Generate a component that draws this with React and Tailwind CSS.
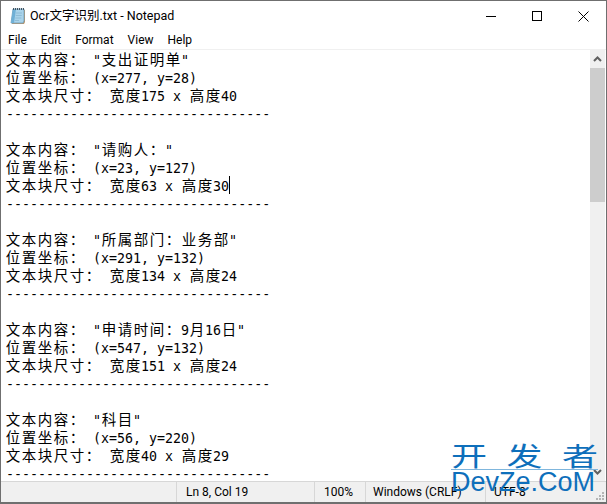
import React from "react";

const BLOCKS = [
  ["文本内容： \"支出证明单\"", "位置坐标： (x=277, y=28)", "文本块尺寸： 宽度175 x 高度40"],
  ["文本内容： \"请购人：\"", "位置坐标： (x=23, y=127)", "文本块尺寸： 宽度63 x 高度30"],
  ["文本内容： \"所属部门：业务部\"", "位置坐标： (x=291, y=132)", "文本块尺寸： 宽度134 x 高度24"],
  ["文本内容： \"申请时间：9月16日\"", "位置坐标： (x=547, y=132)", "文本块尺寸： 宽度151 x 高度24"],
  ["文本内容： \"科目\"", "位置坐标： (x=56, y=220)", "文本块尺寸： 宽度40 x 高度29"],
];
const DASHES = "-".repeat(33);

// wide chars sit in a 16px cell, latin stays on the 8px grid
const TextLine = ({ text, caret }) => (
  <div className="h-[18px] leading-[18px] whitespace-pre flex items-baseline">
    {Array.from(text).map((ch, i) =>
      /[\u4e00-\u9fff\uff00-\uffef]/.test(ch) ? (
        <span key={i} className="w-[16px] text-[14.5px] text-center shrink-0 font-['Noto_Sans_CJK_SC',sans-serif]">{ch}</span>
      ) : (
        <span key={i} className="w-[8px] shrink-0">{ch}</span>
      )
    )}
    {caret && <span className="w-px h-[18px] bg-black self-start" />}
  </div>
);

const NotepadIcon = () => (
  <svg width="17" height="18" viewBox="0 0 17 18" className="shrink-0">
    <path d="M5 3h11v12l-1 2H3z" fill="#b9946a" />
    <path d="M4 2h11v12l-1 2H2z" fill="#a9d3ea" stroke="#6b9dbb" strokeWidth=".8" />
    <path d="M4 2 2 16h3l2-14z" fill="#6fb0d6" />
    <path d="M7 6h6M6.700 8.500h6M6.300 11h6M6 13.500h4" stroke="#8fbcd6" />
    <path d="M4.500 1v2M6.500 1v2M8.500 1v2M10.500 1v2M12.500 1v2M14.500 1v2" stroke="#44525c" />
  </svg>
);

const ResizeGrip = () => (
  <div className="absolute right-[2px] bottom-[2px] grid grid-cols-3 gap-px w-[8px]">
    <span /><span />
    <span className="h-[2px] bg-[#b4b4b4]" />
    <span />
    <span className="h-[2px] bg-[#b4b4b4]" />
    <span className="h-[2px] bg-[#b4b4b4]" />
    <span className="h-[2px] bg-[#b4b4b4]" />
    <span className="h-[2px] bg-[#b4b4b4]" />
    <span className="h-[2px] bg-[#b4b4b4]" />
  </div>
);

const Scrollbar = () => (
  <div className="w-[15px] mr-px shrink-0 flex flex-col bg-[#f0f0f0]">
    <div className="h-[18px] flex items-center justify-center">
      <svg width="9" height="6" viewBox="0 0 9 6"><path d="M1 5l3.500-3.500L8 5" fill="none" stroke="#606060" strokeWidth="2" /></svg>
    </div>
    <div className="h-[134px] bg-[#cdcdcd]" />
    <div className="flex-1" />
    <div className="h-[18px] flex items-center justify-center">
      <svg width="9" height="6" viewBox="0 0 9 6"><path d="M1 1l3.500 3.500L8 1" fill="none" stroke="#606060" strokeWidth="2" /></svg>
    </div>
  </div>
);

export default function App() {
  return (
    <div className="relative w-[607px] h-[504px] overflow-hidden bg-white border border-b-2 border-[#6f6f6f] flex flex-col font-['Roboto','Noto_Sans_CJK_SC',sans-serif] text-black">
      <div className="h-[30px] shrink-0 flex items-center">
        <div className="pl-[8px] pr-[4px] flex items-center"><NotepadIcon /></div>
        <span className="text-[12.5px] text-black">Ocr文字识别.txt - Notepad</span>
        <div className="ml-auto flex items-center h-full">
          <div className="w-[46px] flex justify-center">
            <div className="w-[10px] h-px bg-black" />
          </div>
          <div className="w-[46px] flex justify-center">
            <div className="w-[10px] h-[10px] border border-black" />
          </div>
          <div className="w-[46px] flex justify-center">
            <svg width="11" height="11" viewBox="0 0 11 11"><path d="M.5.500l10 10M10.500.500l-10 10" stroke="#000" /></svg>
          </div>
        </div>
      </div>
      <div className="h-[18px] shrink-0 flex items-center gap-[14px] pl-[7px] text-[12px]">
        <span>File</span>
        <span>Edit</span>
        <span>Format</span>
        <span>View</span>
        <span>Help</span>
      </div>
      <div className="flex-1 min-h-0 flex border-t border-[#f0f0f0]">
        <div className="flex-1 overflow-hidden pl-[4px] font-['DejaVu_Sans_Mono',monospace] text-[13.3px]">
          {BLOCKS.map((lines, b) => (
            <div key={b}>
              {lines.map((t, i) => <TextLine key={i} text={t} caret={b === 1 && i === 2} />)}
              <div className="h-[18px] pt-[2px] pl-px leading-[18px] whitespace-pre">{DASHES}</div>
              <div className="h-[18px]" />
            </div>
          ))}
        </div>
        <Scrollbar />
      </div>
      <div className="relative h-[21px] shrink-0 flex items-center bg-[#f0f0f0] border-t border-[#d7d7d7] text-[12px]">
        <div className="w-[175px] h-full" />
        <div className="w-[138px] h-full border-l border-[#d7d7d7] pl-[9px] flex items-center">Ln 8, Col 19</div>
        <div className="w-[51px] h-full border-l border-[#d7d7d7] pl-[9px] flex items-center">100%</div>
        <div className="w-[120px] h-full border-l border-[#d7d7d7] pl-[7px] flex items-center">Windows (CRLF)</div>
        <div className="flex-1 h-full border-l border-[#d7d7d7] pl-[8px] flex items-center">UTF-8</div>
        <ResizeGrip />
      </div>
      <div className="absolute left-[450px] top-[440px] w-[147px] flex flex-col text-[#0e6fbb]">
        <div className="flex justify-between h-[26px] text-[36px] leading-[26px] scale-y-[0.74] font-['Noto_Sans_CJK_SC',sans-serif]">
          <span>开</span><span>发</span><span>者</span>
        </div>
        <div className="h-px bg-[#7fb6dd] mt-[2px]" />
        <div className="text-[27px] leading-[24px] whitespace-nowrap font-['Liberation_Sans',sans-serif]">DevZe.CoM</div>
      </div>
    </div>
  );
}
